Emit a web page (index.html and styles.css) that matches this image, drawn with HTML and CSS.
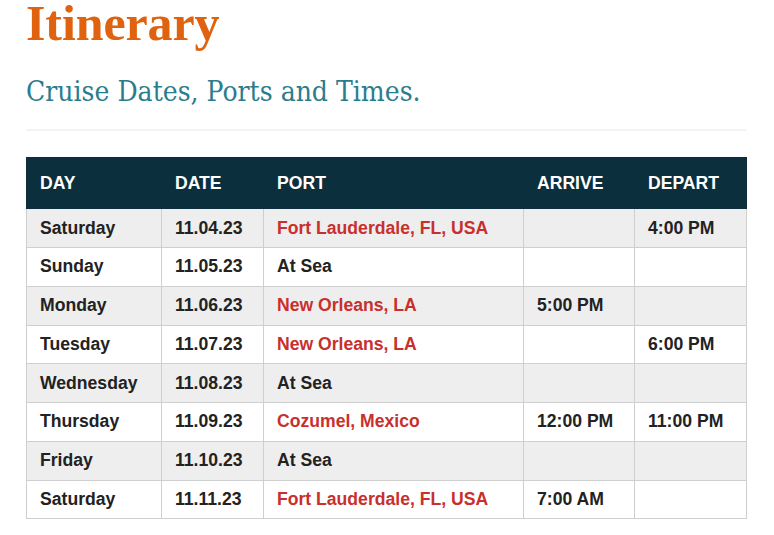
FILE: index.html
```html
<!DOCTYPE html>
<html lang="en">
<head>
<meta charset="utf-8">
<title>Itinerary</title>
<link rel="stylesheet" href="styles.css">
</head>
<body>
<main class="page">
  <h1 class="title">Itinerary</h1>
  <h2 class="subtitle">Cruise Dates, Ports and Times.</h2>
  <hr class="divider">
  <table class="itinerary">
    <colgroup>
      <col class="c-day"><col class="c-date"><col class="c-port"><col class="c-arrive"><col class="c-depart">
    </colgroup>
    <thead>
      <tr><th>DAY</th><th>DATE</th><th>PORT</th><th>ARRIVE</th><th>DEPART</th></tr>
    </thead>
    <tbody>
      <tr><td>Saturday</td><td>11.04.23</td><td class="port">Fort Lauderdale, FL, USA</td><td></td><td>4:00 PM</td></tr>
      <tr><td>Sunday</td><td>11.05.23</td><td>At Sea</td><td></td><td></td></tr>
      <tr><td>Monday</td><td>11.06.23</td><td class="port">New Orleans, LA</td><td>5:00 PM</td><td></td></tr>
      <tr><td>Tuesday</td><td>11.07.23</td><td class="port">New Orleans, LA</td><td></td><td>6:00 PM</td></tr>
      <tr><td>Wednesday</td><td>11.08.23</td><td>At Sea</td><td></td><td></td></tr>
      <tr><td>Thursday</td><td>11.09.23</td><td class="port">Cozumel, Mexico</td><td>12:00 PM</td><td>11:00 PM</td></tr>
      <tr><td>Friday</td><td>11.10.23</td><td>At Sea</td><td></td><td></td></tr>
      <tr><td>Saturday</td><td>11.11.23</td><td class="port">Fort Lauderdale, FL, USA</td><td>7:00 AM</td><td></td></tr>
    </tbody>
  </table>
</main>
</body>
</html>
```

FILE: styles.css
```css
html, body {
  margin: 0;
  padding: 0;
  background: #ffffff;
}

.page {
  width: 720px;
  padding: 0 0 0 26px;
}

.title {
  margin: 0;
  font-family: "Liberation Serif", "Times New Roman", serif;
  font-weight: 700;
  font-size: 50px;
  line-height: 46px;
  color: #e0620f;
  letter-spacing: -0.1px;
}

.subtitle {
  margin: 29px 0 0 0;
  font-family: "DejaVu Serif Condensed", "DejaVu Serif", serif;
  font-weight: 400;
  font-size: 28px;
  line-height: 34px;
  color: #2a7d8e;
}

.divider {
  margin: 20px 0 0 0;
  height: 2px;
  border: 0;
  background: #f3f3f3;
}

.itinerary {
  margin-top: 26px;
  width: 720px;
  border-collapse: collapse;
  table-layout: fixed;
  font-family: "Liberation Sans", Arial, sans-serif;
  font-weight: 700;
  font-size: 17.6px;
  color: #222222;
}

.c-day { width: 135px; }
.c-date { width: 102px; }
.c-port { width: 260px; }
.c-arrive { width: 111px; }
.c-depart { width: 112px; }

.itinerary th {
  background: #0b2f3d;
  color: #ffffff;
  text-align: left;
  padding: 14.6px 13px;
  line-height: 21px;
  border: 1px solid #0b2f3d;
  font-weight: 700;
}

.itinerary td {
  padding: 8.4px 13px;
  line-height: 21px;
  border: 1px solid #cfcfcf;
  white-space: nowrap;
}

.itinerary tbody tr:nth-child(odd) td {
  background: #eeeeee;
}

.itinerary td.port {
  color: #c8302c;
}
```
